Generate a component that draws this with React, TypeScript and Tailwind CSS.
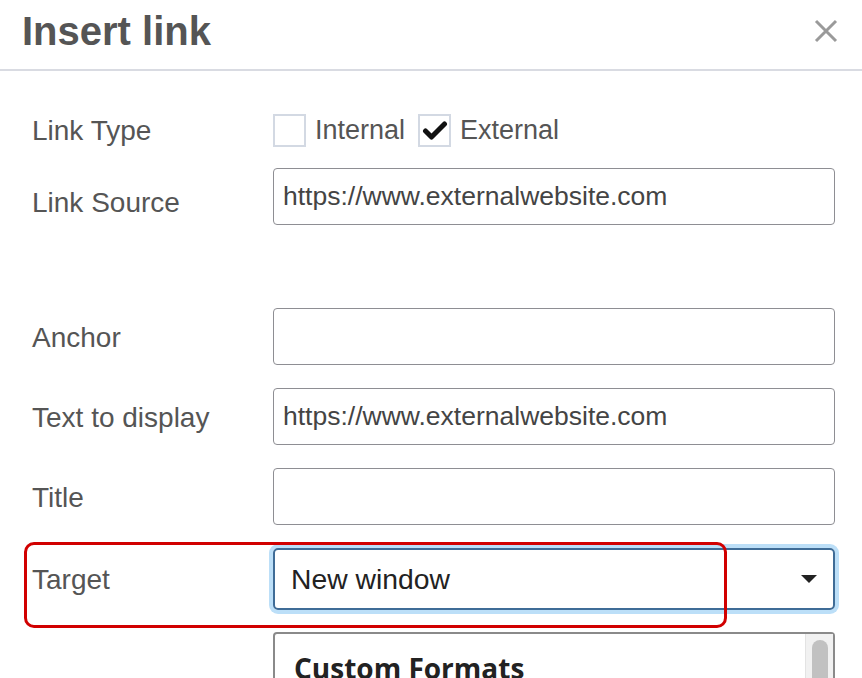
const font = { fontFamily: '"Liberation Sans", Arial, sans-serif' };

const Row = ({
  label,
  children,
  labelClass = "",
  className = "",
}: {
  label: string;
  children: React.ReactNode;
  labelClass?: string;
  className?: string;
}) => (
  <div className={`flex items-center pl-[32px] pr-[27px] ${className}`}>
    <div className={`w-[241px] shrink-0 text-[28px] leading-none text-[#555] ${labelClass}`}>
      {label}
    </div>
    <div className="flex-1">{children}</div>
  </div>
);

const TextInput = ({ value }: { value?: string }) => (
  <div className="h-[57px] rounded-[4px] border-[1.5px] border-[#8e8e93] flex items-center px-[9px] text-[26.5px] text-[#444]">
    {value}
  </div>
);

const App = () => {
  return (
    <div className="w-[862px] h-[678px] overflow-hidden bg-white relative" style={font}>
      <div className="h-[69px] flex items-center justify-between pl-[22px] pr-[24px] border-b-2 border-[#d9dbe2] box-content">
        <h1 className="text-[40px] font-bold text-[#555] leading-none -mt-[8px]">
          Insert link
        </h1>
        <svg width="24" height="24" viewBox="0 0 24 24" className="-mt-[8px]">
          <path d="M2 2 L22 22 M22 2 L2 22" stroke="#9a9a9a" strokeWidth="3" />
        </svg>
      </div>

      <Row label="Link Type" className="mt-[43px] h-[33px]">
        <div className="flex items-center text-[27px] text-[#555]">
          <div className="w-[33px] h-[33px] border-2 border-[#d3d9e3] bg-white" />
          <span className="ml-[9px]">Internal</span>
          <div className="ml-[13px] w-[33px] h-[33px] border-2 border-[#d3d9e3] bg-white flex items-center justify-center">
            <svg width="26" height="22" viewBox="0 0 26 22">
              <path
                d="M3.5 11 L9.5 17 L22.5 4"
                stroke="#111"
                strokeWidth="5"
                fill="none"
                strokeLinecap="round"
                strokeLinejoin="round"
              />
            </svg>
          </div>
          <span className="ml-[9px]">External</span>
        </div>
      </Row>

      <Row label="Link Source" className="mt-[21px]" labelClass="pt-[13px]">
        <TextInput value="https://www.externalwebsite.com" />
      </Row>

      <Row label="Anchor" className="mt-[83px]" labelClass="pt-[2px]">
        <TextInput />
      </Row>

      <Row label="Text to display" className="mt-[23px]" labelClass="pt-[2px]">
        <TextInput value="https://www.externalwebsite.com" />
      </Row>

      <Row label="Title" className="mt-[23px]" labelClass="pt-[2px]">
        <TextInput />
      </Row>

      <div className="relative">
        <Row label="Target" className="mt-[23px]" labelClass="pt-[2px]">
          <div className="h-[62px] rounded-[5px] border-2 border-[#3f6c97] ring-4 ring-[#bcdff8] flex items-center justify-between pl-[16px] pr-[16px] text-[28.3px] text-[#222]">
            <span>New window</span>
            <svg width="16" height="8" viewBox="0 0 16 8">
              <path d="M0 0 L16 0 L8 8 Z" fill="#222" />
            </svg>
          </div>
        </Row>
        <div className="absolute left-[24px] top-[-6px] w-[703px] h-[86px] border-[3px] border-[#d10000] rounded-[10px] pointer-events-none" />
      </div>

      <div className="ml-[273px] mr-[27px] mt-[22px] h-[60px] border-2 border-b-0 border-[#8a8a8a] rounded-t-[4px] flex">
        <div className="flex-1 pl-[19px] pt-[20px]">
          <div
            className="text-[28px] font-bold text-[#222] leading-none"
            style={{ fontFamily: '"Open Sans", sans-serif' }}
          >
            Custom Formats
          </div>
        </div>
        <div className="w-[28px] bg-[#f1f1f1] border-l border-[#e3e3e3] flex justify-center pt-[6px]">
          <div className="w-[16px] h-[60px] rounded-full bg-[#c1c1c1]" />
        </div>
      </div>
    </div>
  );
};

export default App;
